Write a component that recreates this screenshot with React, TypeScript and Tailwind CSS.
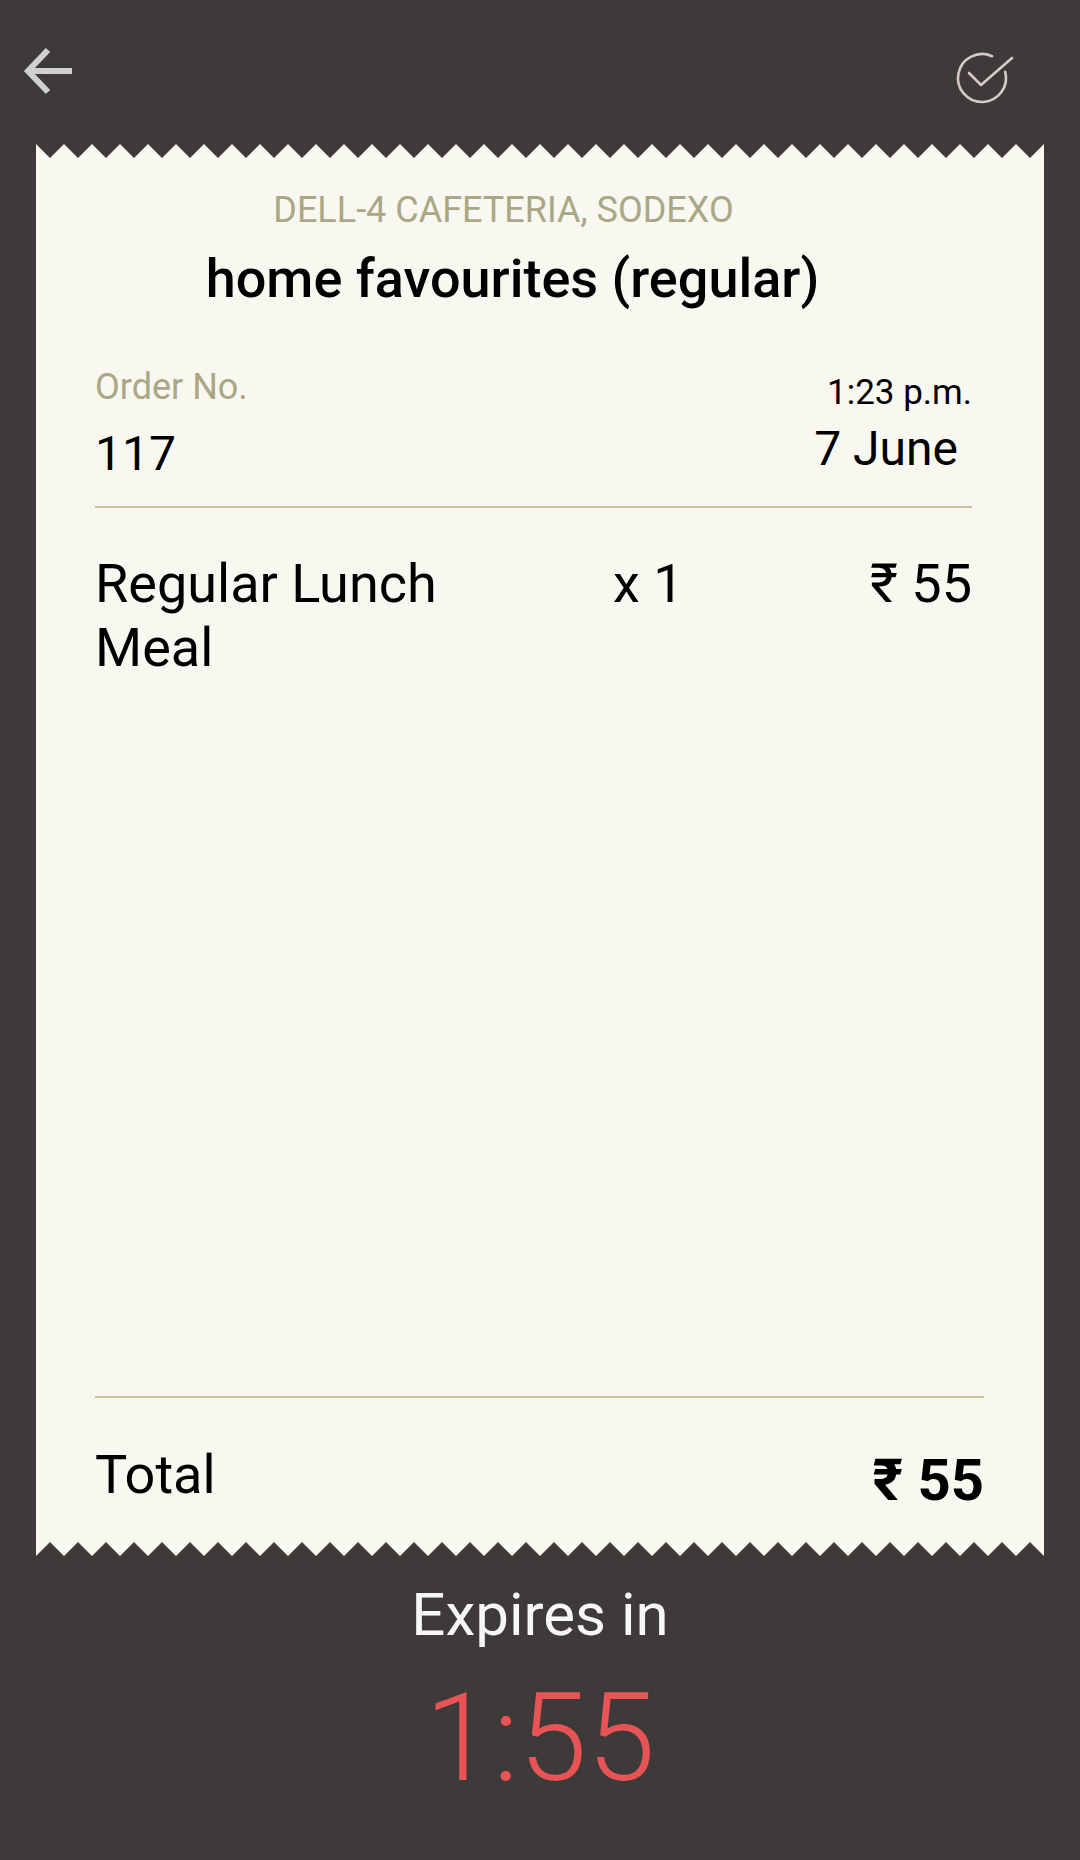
const TEETH = 36;
const TOOTH = 28;
const PAPER = "#f9f8f0";

function topEdge() {
  const pts: string[] = ["0,14"];
  for (let k = 0; k <= TEETH; k++) {
    pts.push(`${k * TOOTH},0`);
    if (k < TEETH) pts.push(`${k * TOOTH + TOOTH / 2},14`);
  }
  pts.push(`${TEETH * TOOTH},14`);
  return pts.join(" ");
}

function bottomEdge() {
  const pts: string[] = ["0,0", `${TEETH * TOOTH},0`];
  for (let k = TEETH; k >= 0; k--) {
    pts.push(`${k * TOOTH},14`);
    if (k > 0) pts.push(`${k * TOOTH - TOOTH / 2},0`);
  }
  return pts.join(" ");
}

function BackArrow() {
  return (
    <svg width="80" height="80" viewBox="0 0 80 80" className="ml-[10px] mt-[31px] shrink-0">
      <path d="M38 19 L18 40 L38 61" fill="none" stroke="#d0d0d0" strokeWidth="6" strokeLinejoin="miter" />
      <path d="M19 40 H62" fill="none" stroke="#d0d0d0" strokeWidth="6" />
    </svg>
  );
}

function CheckCircle() {
  return (
    <svg width="70" height="70" viewBox="0 0 70 70" className="mr-[60px] mt-[43px] shrink-0">
      <path d="M55.2 28.8 A24 24 0 1 1 42.1 13.2" fill="none" stroke="#d6c9c9" strokeWidth="2.6" strokeLinecap="round" />
      <path d="M19 30 L31 42 L62 15" fill="none" stroke="#d6c9c9" strokeWidth="2.6" strokeLinecap="round" strokeLinejoin="round" />
    </svg>
  );
}

export default function App() {
  return (
    <div className="min-h-[1860px] w-full bg-[#3e3a39] font-[Roboto,sans-serif]">
      {/* top bar */}
      <div className="flex h-[144px] items-start justify-between">
        <BackArrow />
        <CheckCircle />
      </div>

      {/* receipt */}
      <div className="mx-[36px] flex flex-col">
        <svg width="1008" height="14" viewBox="0 0 1008 14" className="block">
          <polygon points={topEdge()} fill={PAPER} />
        </svg>

        <div className="flex h-[1384px] flex-col bg-[#f9f8f0]">
          <div className="mt-[34px] pr-[73px] text-center text-[36px] leading-none text-[#a9a785]">
            DELL-4 CAFETERIA, SODEXO
          </div>
          <div className="mt-[24px] pr-[55px] text-center text-[54px] font-medium leading-none text-black">
            home favourites (regular)
          </div>

          <div className="pl-[59px] pr-[72px]">
            <div className="mt-[63px] flex items-start justify-between">
              <div className="flex flex-col">
                <span className="text-[36px] leading-none text-[#a9a785]">Order No.</span>
                <span className="mt-[25px] text-[48px] leading-none text-black">117</span>
              </div>
              <div className="flex flex-col items-end pt-[6px]">
                <span className="text-[35px] leading-none text-black">1:23 p.m.</span>
                <span className="mr-[14px] mt-[15px] text-[48px] leading-none text-black">7 June</span>
              </div>
            </div>

            <div className="mt-[28px] h-[2px] bg-[#c6c3a0]"></div>

            <div className="mt-[44px] flex items-start text-[54px] leading-[64px] text-black">
              <div className="w-[518px] pr-[80px]">Regular Lunch Meal</div>
              <div>x 1</div>
              <div className="ml-auto">₹ 55</div>
            </div>
          </div>

          <div className="flex-1"></div>

          <div className="pb-[33px] pl-[59px] pr-[60px]">
            <div className="h-[2px] bg-[#c6c3a0]"></div>
            <div className="mt-[50px] flex items-start justify-between text-black">
              <span className="text-[54px] leading-none">Total</span>
              <span className="mt-[3px] text-[58px] font-bold leading-none">₹ 55</span>
            </div>
          </div>
        </div>

        <svg width="1008" height="14" viewBox="0 0 1008 14" className="block">
          <polygon points={bottomEdge()} fill={PAPER} />
        </svg>
      </div>

      {/* countdown */}
      <div className="flex flex-col items-center">
        <div className="mt-[29px] text-[60px] leading-none text-[#f7f7f7]">Expires in</div>
        <div className="mt-[32px] text-[123px] font-light leading-none text-[#e85455]">1:55</div>
      </div>
    </div>
  );
}
